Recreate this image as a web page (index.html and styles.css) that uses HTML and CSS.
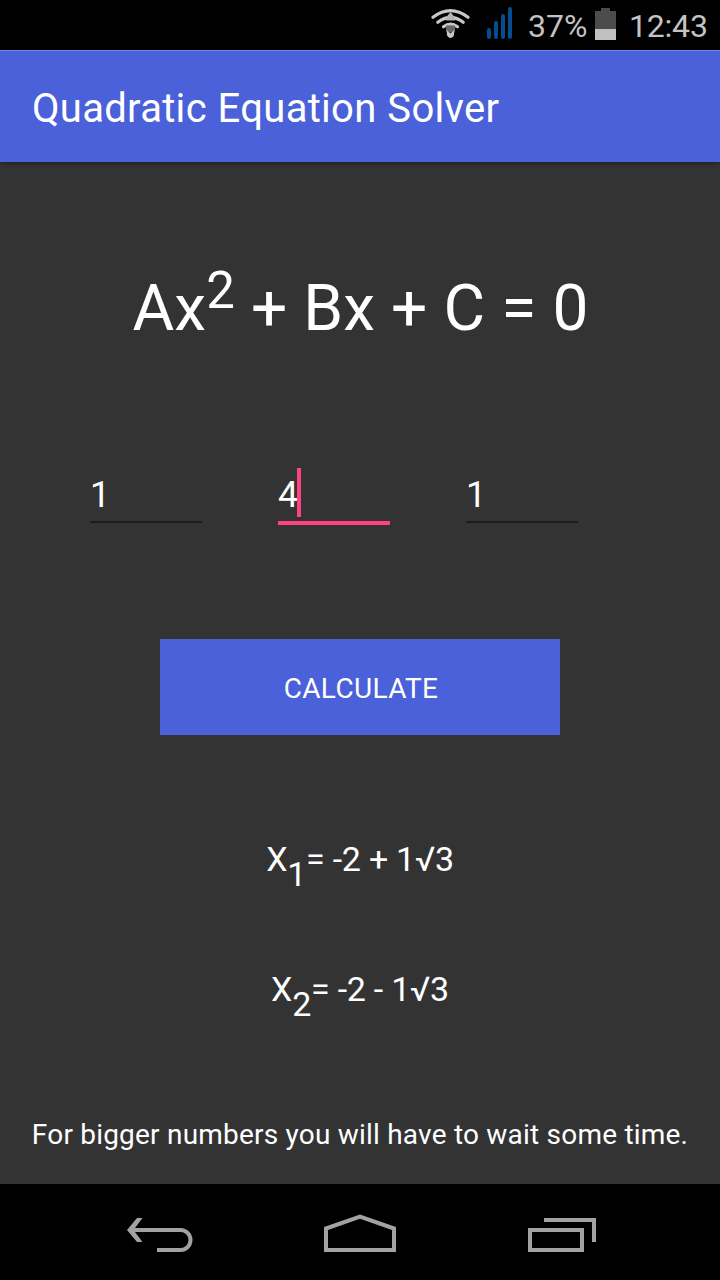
FILE: index.html
```html
<!DOCTYPE html>
<html lang="en">
<head>
<meta charset="utf-8">
<title>Quadratic Equation Solver</title>
<link rel="stylesheet" href="styles.css">
</head>
<body>
<div class="screen">
  <div class="status-bar">
    <svg class="wifi" width="40" height="34" viewBox="430 6 40 34">
      <g fill="none" stroke="#c8c8c8" stroke-width="3.200" stroke-linecap="round">
        <path d="M433 17.200Q450.500 4 468 17.200"/>
        <path d="M437.800 22.300Q450.500 12.500 463.200 22.300"/>
        <path d="M443.500 26.800Q450.500 21.500 457.500 26.800"/>
      </g>
      <path d="M446 20.500v-3l4.500-5.500 4.500 5.500v3z" fill="#b4b4b4"/>
      <path d="M446 25.500h9v4l-2.500 3h-4l-2.500-3z" fill="#666"/>
      <path d="M446 29.500l4.500 4 4.500-4-1 4a3.600 3.600 0 1 1-7 0z" fill="#c8c8c8"/>
    </svg>
    <svg class="signal" width="26" height="34" viewBox="486 6 26 34">
      <g stroke="#024e8e" stroke-width="4" stroke-linecap="round">
        <path d="M489 30v7M496 23v14M503 16v21M510 9v28"/>
      </g>
    </svg>
    <span class="percent">37%</span>
    <svg class="battery" width="21" height="34" viewBox="595 6 21 34">
      <path d="M601 8h9v3h6v18h-21V11h6z" fill="#4c4c4c"/>
      <path d="M595 29h21v11h-21z" fill="#c0c0c0"/>
    </svg>
    <span class="clock">12:43</span>
  </div>
  <header class="app-bar"><h1 class="title">Quadratic Equation Solver</h1></header>
  <main class="content">
    <div class="formula">Ax<sup class="power">2</sup> + Bx + C = 0</div>
    <div class="fields">
      <div class="field">1</div>
      <div class="field focused">4<span class="caret"></span></div>
      <div class="field">1</div>
    </div>
    <button class="calculate">CALCULATE</button>
    <div class="root first">X<sub class="index">1</sub>= -2 + 1√3</div>
    <div class="root second">X<sub class="index">2</sub>= -2 - 1√3</div>
    <p class="note">For bigger numbers you will have to wait some time.</p>
  </main>
  <nav class="nav-bar">
    <svg width="720" height="96" viewBox="0 1184 720 96" fill="none" stroke="#a2a2a2" stroke-width="4">
      <path d="M157 1250h23.500a10 10 0 0 0 0-20H131"/>
      <path d="M137 1218h5.500L133.500 1230l9 12H137L127 1230z" fill="#a2a2a2" stroke="none"/>
      <path d="M326 1250v-21.500l34-12 34 12V1250z"/>
      <path d="M530 1230h52v20h-52zM544 1220h50v22"/>
    </svg>
  </nav>
</div>
</body>
</html>
```
FILE: styles.css
```css
body {
  margin: 0;
  background: #333;
}

.screen {
  display: flex;
  flex-direction: column;
  width: 720px;
  height: 1280px;
  overflow: hidden;
  background: #333;
  color: #fff;
  font-family: Roboto, sans-serif;
}

.status-bar {
  display: flex;
  align-items: flex-start;
  box-sizing: border-box;
  height: 50px;
  padding: 6px 0 0 430px;
  background: #000;
  color: #c3c3c3;
  font-size: 32px;
  line-height: 40px;
  white-space: nowrap;
}

.status-bar svg {
  flex: none;
}

.signal {
  margin-left: 16px;
}

.percent {
  flex: none;
  width: 67px;
  margin-left: 16px;
}

.clock {
  margin-left: 13px;
  letter-spacing: -0.2px;
}

.app-bar {
  display: flex;
  align-items: center;
  box-sizing: border-box;
  flex: none;
  height: 112px;
  padding: 4px 32px 0;
  border-top: 1px solid #7987e0;
  background: #4a61da;
  box-shadow: 0 1px 5px rgba(0, 0, 0, 0.45);
}

.title {
  margin: 0;
  font-size: 40px;
  font-weight: 400;
  letter-spacing: 0.3px;
  word-spacing: 0.5px;
  line-height: 48px;
  white-space: nowrap;
}

.content {
  display: flex;
  flex-direction: column;
  align-items: center;
  height: 1022px;
}

.formula {
  height: 80px;
  margin-top: 107px;
  padding-left: 1px;
  font-size: 64px;
  letter-spacing: 0.1px;
  line-height: 80px;
  white-space: nowrap;
}

.power {
  font-size: 51px;
  line-height: 0;
  vertical-align: 22px;
}

.fields {
  display: flex;
  align-self: flex-start;
  gap: 76px;
  height: 57px;
  margin: 119px 0 0 90px;
}

.field {
  display: flex;
  box-sizing: border-box;
  width: 112px;
  height: 55px;
  border-bottom: 2px solid #1c1c1c;
  font-size: 36px;
  line-height: 55px;
}

.focused {
  height: 57px;
  border-bottom: 4px solid #ff4081;
}

.caret {
  width: 4px;
  height: 49px;
  margin-left: -1px;
  background: #ff4081;
}

.calculate {
  width: 400px;
  height: 96px;
  margin-top: 114px;
  padding: 3px 0 0 2px;
  border: 0;
  background: #4a61da;
  color: #fff;
  font: 400 28px/32px Roboto, sans-serif;
  letter-spacing: 0.35px;
}

.root {
  height: 40px;
  font-size: 34px;
  letter-spacing: -0.25px;
  line-height: 40px;
  white-space: nowrap;
}

.first {
  margin-top: 104px;
}

.second {
  margin-top: 90px;
}

.index {
  font-size: 34px;
  line-height: 0;
  vertical-align: -15px;
}

.note {
  margin: 106px 0 0;
  font-size: 28px;
  letter-spacing: 0.21px;
  line-height: 40px;
  white-space: nowrap;
}

.nav-bar {
  height: 96px;
  background: #000;
}

.nav-bar svg {
  display: block;
}
```
